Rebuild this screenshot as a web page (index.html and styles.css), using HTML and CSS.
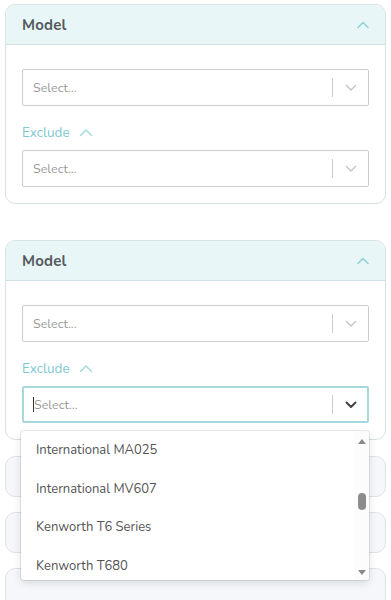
FILE: index.html
```html
<!DOCTYPE html>
<html lang="en">
<head>
<meta charset="utf-8">
<title>Model filter</title>
<link rel="stylesheet" href="styles.css">
</head>
<body>
<div class="page">
  <section class="card">
    <header class="card-head">
      <span class="card-title">Model</span>
      <svg class="head-chev" width="12" height="8" viewBox="0 0 12 8"><path d="M1 6.5 6 1.5 11 6.5" fill="none" stroke="currentColor" stroke-width="1.6" stroke-linecap="round" stroke-linejoin="round"/></svg>
    </header>
    <div class="card-body">
      <div class="select">
        <span class="placeholder">Select...</span>
        <span class="sep"></span>
        <svg class="chev" width="12" height="8" viewBox="0 0 12 8"><path d="M1.5 1.5 6 6 10.5 1.5" fill="none" stroke="currentColor" stroke-width="1.6" stroke-linecap="round" stroke-linejoin="round"/></svg>
      </div>
      <div class="exclude">Exclude
        <svg class="ex-chev" width="14" height="9" viewBox="0 0 14 9"><path d="M1.5 7.5 7 2 12.5 7.5" fill="none" stroke="currentColor" stroke-width="1.6" stroke-linecap="round" stroke-linejoin="round"/></svg>
      </div>
      <div class="select">
        <span class="placeholder">Select...</span>
        <span class="sep"></span>
        <svg class="chev" width="12" height="8" viewBox="0 0 12 8"><path d="M1.5 1.5 6 6 10.5 1.5" fill="none" stroke="currentColor" stroke-width="1.6" stroke-linecap="round" stroke-linejoin="round"/></svg>
      </div>
    </div>
  </section>

  <section class="card card-second">
    <header class="card-head">
      <span class="card-title">Model</span>
      <svg class="head-chev" width="12" height="8" viewBox="0 0 12 8"><path d="M1 6.5 6 1.5 11 6.5" fill="none" stroke="currentColor" stroke-width="1.6" stroke-linecap="round" stroke-linejoin="round"/></svg>
    </header>
    <div class="card-body">
      <div class="select">
        <span class="placeholder">Select...</span>
        <span class="sep"></span>
        <svg class="chev" width="12" height="8" viewBox="0 0 12 8"><path d="M1.5 1.5 6 6 10.5 1.5" fill="none" stroke="currentColor" stroke-width="1.6" stroke-linecap="round" stroke-linejoin="round"/></svg>
      </div>
      <div class="exclude">Exclude
        <svg class="ex-chev" width="14" height="9" viewBox="0 0 14 9"><path d="M1.5 7.5 7 2 12.5 7.5" fill="none" stroke="currentColor" stroke-width="1.6" stroke-linecap="round" stroke-linejoin="round"/></svg>
      </div>
      <div class="select-wrap">
        <div class="select select-focus">
          <span class="caret"></span>
          <span class="placeholder">Select...</span>
          <span class="sep"></span>
          <svg class="chev chev-dark" width="12" height="8" viewBox="0 0 12 8"><path d="M1.5 1.5 6 6 10.5 1.5" fill="none" stroke="currentColor" stroke-width="2" stroke-linecap="round" stroke-linejoin="round"/></svg>
        </div>
        <div class="menu">
          <ul class="options">
            <li>International MA025</li>
            <li>International MV607</li>
            <li>Kenworth T6 Series</li>
            <li>Kenworth T680</li>
          </ul>
          <div class="scrollbar">
            <span class="arrow arrow-up"></span>
            <span class="track"><span class="thumb"></span></span>
            <span class="arrow arrow-down"></span>
          </div>
        </div>
      </div>
    </div>
  </section>

  <div class="stub stub-first"></div>
  <div class="stub"></div>
  <div class="stub"></div>
</div>
</body>
</html>
```

FILE: styles.css
```css
* { box-sizing: border-box; }
html, body { margin: 0; padding: 0; background: #fff; }
body {
  font-family: "Nunito", "Lato", "Noto Sans", sans-serif;
  width: 391px;
  height: 600px;
  overflow: hidden;
}
.page {
  padding: 4px 5px 0 5px;
  display: flex;
  flex-direction: column;
}
.card {
  border: 1px solid #d8e1e4;
  border-radius: 10px;
  background: #fff;
  flex-shrink: 0;
}
.card-second { margin-top: 36px; }
.card-head {
  height: 40px;
  background: #e8f6f8;
  border-bottom: 1px solid #cfe3e7;
  border-radius: 9px 9px 0 0;
  display: flex;
  align-items: center;
  justify-content: space-between;
  padding: 0 16px 0 16px;
}
.card-title {
  font-weight: 700;
  font-size: 15px;
  color: #555a5e;
  letter-spacing: 0.2px;
}
.head-chev { color: #93d2d9; }
.card-body {
  padding: 24px 16px 16px 16px;
  display: flex;
  flex-direction: column;
}
.select {
  height: 37px;
  border: 1px solid #cccccc;
  border-radius: 2px;
  display: flex;
  align-items: center;
  padding: 0 0 0 10px;
  background: #fff;
}
.placeholder {
  flex: 1;
  font-size: 12.5px;
  color: #9a9a9a;
}
.sep {
  width: 1px;
  height: 19px;
  background: #cccccc;
}
.chev {
  color: #c8c8c8;
  margin: 0 11px 0 12px;
}
.exclude {
  margin: 17px 0 9px 0;
  height: 18px;
  display: flex;
  align-items: center;
  gap: 9px;
  font-size: 13.5px;
  color: #7ec7cf;
}
.ex-chev { color: #a8dadf; }
.select-wrap { position: relative; }
.select-focus {
  border: 2px solid #a6d9df;
  padding-left: 9px;
}
.caret {
  width: 1px;
  height: 15px;
  background: #333;
}
.chev-dark { color: #444; margin-right: 10px; }
.menu {
  position: absolute;
  left: -1px;
  right: 0;
  top: 45px;
  height: 149px;
  background: #fff;
  border-radius: 3px;
  box-shadow: 0 0 0 1px rgba(0,0,0,0.08), 0 3px 8px rgba(0,0,0,0.12);
  display: flex;
  z-index: 5;
  overflow: hidden;
}
.options {
  list-style: none;
  margin: 0;
  padding: 0;
  flex: 1;
}
.options li {
  height: 38.5px;
  display: flex;
  align-items: center;
  padding: 0 15px;
  font-size: 13px;
  color: #555;
}
.scrollbar {
  width: 15px;
  display: flex;
  flex-direction: column;
  align-items: center;
  background: #fcfcfc;
  padding: 8px 0 5px;
}
.arrow {
  width: 0;
  height: 0;
  border-left: 4px solid transparent;
  border-right: 4px solid transparent;
}
.arrow-up { border-bottom: 5px solid #8a8a8a; }
.arrow-down { border-top: 5px solid #8a8a8a; }
.track {
  flex: 1;
  display: flex;
  flex-direction: column;
  align-items: center;
  padding-top: 49px;
}
.thumb {
  width: 8px;
  height: 17px;
  border-radius: 4px;
  background: #8c8c8c;
}
.stub {
  height: 41px;
  margin-top: 15px;
  border: 1px solid #dde3e8;
  border-radius: 10px;
  background: #f5f7fa;
  flex-shrink: 0;
}
.stub-first { margin-top: 16px; }
```
